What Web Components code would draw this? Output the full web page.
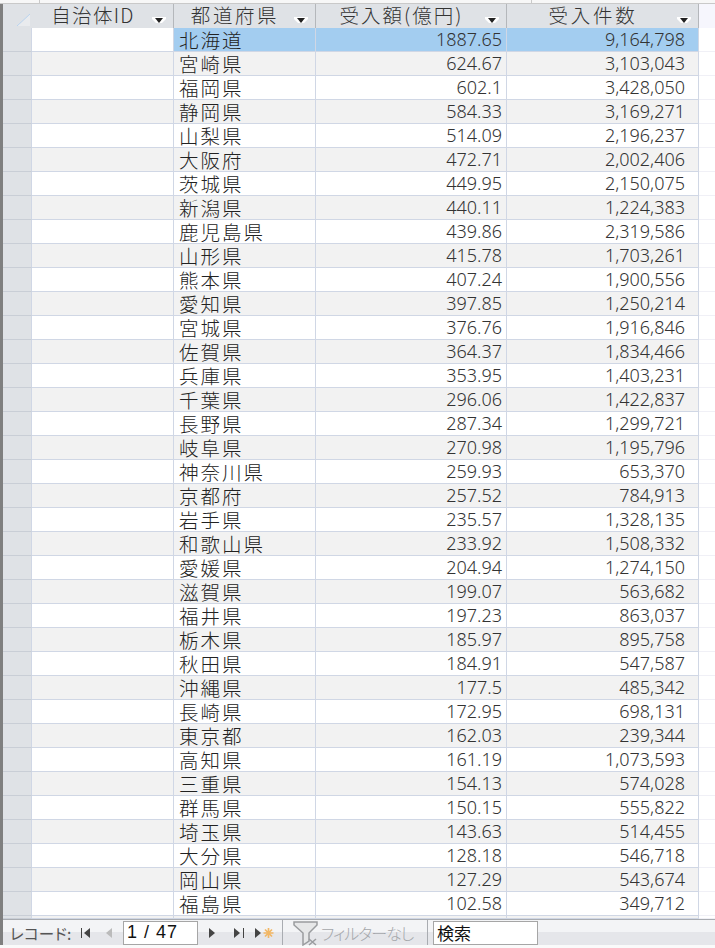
<!DOCTYPE html>
<html lang="ja">
<head>
<meta charset="utf-8">
<title>受入額</title>
<style>
html, body { margin: 0; padding: 0; background: #fafafa; }
body { font-family: "Noto Sans CJK JP", sans-serif; width: 715px; height: 948px; overflow: hidden; }
</style>
</head>
<body>
<access-window></access-window>

<script>
const GRID = '29px 142px 142px 191px 192px';
const CJK = '"Noto Sans CJK JP", sans-serif';
const NUM = '"Noto Sans", "Noto Sans CJK JP", sans-serif';

const DATA = [
  ['北海道','1887.65','9,164,798'],['宮崎県','624.67','3,103,043'],['福岡県','602.1','3,428,050'],
  ['静岡県','584.33','3,169,271'],['山梨県','514.09','2,196,237'],['大阪府','472.71','2,002,406'],
  ['茨城県','449.95','2,150,075'],['新潟県','440.11','1,224,383'],['鹿児島県','439.86','2,319,586'],
  ['山形県','415.78','1,703,261'],['熊本県','407.24','1,900,556'],['愛知県','397.85','1,250,214'],
  ['宮城県','376.76','1,916,846'],['佐賀県','364.37','1,834,466'],['兵庫県','353.95','1,403,231'],
  ['千葉県','296.06','1,422,837'],['長野県','287.34','1,299,721'],['岐阜県','270.98','1,195,796'],
  ['神奈川県','259.93','653,370'],['京都府','257.52','784,913'],['岩手県','235.57','1,328,135'],
  ['和歌山県','233.92','1,508,332'],['愛媛県','204.94','1,274,150'],['滋賀県','199.07','563,682'],
  ['福井県','197.23','863,037'],['栃木県','185.97','895,758'],['秋田県','184.91','547,587'],
  ['沖縄県','177.5','485,342'],['長崎県','172.95','698,131'],['東京都','162.03','239,344'],
  ['高知県','161.19','1,073,593'],['三重県','154.13','574,028'],['群馬県','150.15','555,822'],
  ['埼玉県','143.63','514,455'],['大分県','128.18','546,718'],['岡山県','127.29','543,674'],
  ['福島県','102.58','349,712']
];

class HeaderCell extends HTMLElement {
  connectedCallback() {
    this.attachShadow({ mode: 'open' });
    this.shadowRoot.innerHTML = `
      <style>
        :host { display: flex; align-items: center; justify-content: center; position: relative;
                background: #dfe2e6; border-right: 1px solid #b4b7bb; box-sizing: border-box;
                padding: 0 19px 2px 0; white-space: nowrap;
                font: 300 19.5px/22px ${CJK}; letter-spacing: 2px; color: #333; }
        svg { position: absolute; right: 7px; top: 13px; }
      </style>
      <slot></slot>
      <svg width="14" height="8" viewBox="0 0 14 8">
        <path d="M0 0H14V2L10 6H4L0 2Z" fill="#fff"/>
        <path d="M3 1H11L7 6Z" fill="#222"/>
      </svg>`;
  }
}

class SheetHeader extends HTMLElement {
  connectedCallback() {
    this.attachShadow({ mode: 'open' });
    this.shadowRoot.innerHTML = `
      <style>
        :host { display: grid; grid-template-columns: ${GRID} 1fr; height: 24px; background: #f6f6fd; }
        .corner { background: #dfe2e6; position: relative; }
        svg { position: absolute; left: 14px; top: 9px; }
      </style>
      <div class="corner">
        <svg width="14" height="14" viewBox="0 0 14 14"><path d="M0 13L13 1V13Z" fill="#e9ebee"/><path d="M0 13L13 1" stroke="#b9d3ee" fill="none"/></svg>
      </div>
      <header-cell style="letter-spacing:1.3px">自治体ID</header-cell>
      <header-cell style="letter-spacing:2.6px">都道府県</header-cell>
      <header-cell>受入額(億円)</header-cell>
      <header-cell style="letter-spacing:2.8px">受入件数</header-cell>`;
  }
}

class SheetRow extends HTMLElement {
  connectedCallback() {
    const [pref = '', amount = '', count = ''] = (this.getAttribute('values') || '').split('|');
    this.attachShadow({ mode: 'open' });
    this.shadowRoot.innerHTML = `
      <style>
        :host { display: grid; grid-template-columns: ${GRID} 1fr; height: 24px; overflow: visible; background: #fff; color: #222; }
        :host([alt]) { background: #f2f2f2; }
        :host([alt]) .rest { background: #fff; }
        :host([selected]) .pick { background: #a3cdf0; }
        div { box-sizing: border-box; border-bottom: 1px solid #d0d7e5; border-right: 1px solid #d0d7e5;
              white-space: nowrap; line-height: 23px; }
        .sel { background: #dfe2e6; border-bottom-color: #c9ced6; }
        .pref { font: 300 19.5px/23px ${CJK}; letter-spacing: 2px; padding-left: 5px; }
        .num { font: 300 18px/23px ${NUM}; color: #333; text-align: right; padding-right: 4px; }
        .count { padding-right: 13px; }
        .rest { border-right: 0; border-bottom-color: #f0f0f6; }
      </style>
      <div class="sel"></div>
      <div></div>
      <div class="pref pick">${pref}</div>
      <div class="num pick">${amount}</div>
      <div class="num count pick">${count}</div>
      <div class="rest"></div>`;
  }
}

class RecordNav extends HTMLElement {
  connectedCallback() {
    this.attachShadow({ mode: 'open' });
    this.shadowRoot.innerHTML = `
      <style>
        :host { display: flex; align-items: center; height: 26px; box-sizing: border-box; flex: none;
                border-top: 1px solid #a9acb1;
                background: linear-gradient(#f3f4f6 0, #f3f4f6 50%, #e5e6ea 50%, #e5e6ea 100%);
                font-family: ${CJK}; }
        .label { margin-left: 7px; width: 70px; font-size: 15.5px; font-weight: 400; color: #555;
                 white-space: nowrap; font-feature-settings: "palt"; letter-spacing: .3px; }
        .btn { flex: none; display: block; }
        input { box-sizing: border-box; height: 24px; border: 1px solid #a6a6a6; background: #fff; padding: 0 0 0 3px;
                font: 400 18px "Liberation Sans", sans-serif; color: #111; outline: none; }
        .pos { width: 75px; margin: 0 10px; letter-spacing: 1px; }
        .search { width: 105px; font: 400 17px ${CJK}; margin-left: 5px; }
        .sep { width: 1px; align-self: stretch; background: #a9acb1; flex: none; }
        .nofilter { margin-left: 2px; font-size: 16px; font-weight: 300; color: #a4a6aa; width: 106px;
                    white-space: nowrap; font-feature-settings: "palt"; letter-spacing: -1px; }
      </style>
      <span class="label">レコード:</span>
      <svg class="btn" width="12" height="12" viewBox="0 0 12 12" style="margin-right:13px"><path d="M1.500 1V11" stroke="#444"/><path d="M10 1V11L4 6Z" fill="#444"/></svg>
      <svg class="btn" width="8" height="12" viewBox="0 0 8 12"><path d="M7 1V11L1 6Z" fill="#bbb"/></svg>
      <input class="pos" value="1 / 47" readonly>
      <svg class="btn" width="8" height="12" viewBox="0 0 8 12" style="margin-right:17px"><path d="M1 1V11L7 6Z" fill="#444"/></svg>
      <svg class="btn" width="12" height="12" viewBox="0 0 12 12" style="margin-right:10px"><path d="M1 1V11L7 6Z" fill="#444"/><path d="M10.500 1V11" stroke="#444"/></svg>
      <svg class="btn" width="21" height="14" viewBox="0 0 21 14" style="margin-right:6px">
        <path d="M0 2V12L6 7Z" fill="#444"/>
        <path d="M13.500 2V12M8.500 7H18.500M10 3.500L17 10.500M17 3.500L10 10.500" stroke="#f2b765" stroke-width="1.700"/>
      </svg>
      <span class="sep"></span>
      <svg class="btn" width="26" height="25" viewBox="0 0 26 25" style="margin-left:10px;align-self:flex-start;margin-top:1px">
        <path d="M1 1H24V4L16 12V20L10 24V12L1 4Z" fill="#e6e7e8" stroke="#9a9c9f" stroke-width="1.500"/>
        <path d="M16 18L23 24M23 18L16 24" stroke="#9a9c9f" stroke-width="1.500"/>
      </svg>
      <span class="nofilter">フィルターなし</span>
      <span class="sep"></span>
      <input class="search" value="検索" readonly>`;
  }
}

class AccessWindow extends HTMLElement {
  connectedCallback() {
    this.attachShadow({ mode: 'open' });
    const rows = DATA.map((r, i) =>
      `<sheet-row values="${r.join('|')}"${i % 2 ? ' alt' : ''}${i === 0 ? ' selected' : ''}></sheet-row>`).join('');
    this.shadowRoot.innerHTML = `
      <style>
        :host { display: block; width: 715px; height: 948px; }
        .top { height: 3px; background: #f7f7f7; border-bottom: 1px solid #c9c9c9; display: flex; }
        .top i { width: 1px; background: #c9c9c9; margin-left: 39px; }
        .top i + i { margin-left: 491px; }
        .frame { border-left: 3px solid #7f7f7f; height: 941px; display: flex; flex-direction: column; box-sizing: border-box; }
        .sheet { height: 915px; background: #fff; flex: none; }
      </style>
      <div class="top"><i></i><i></i></div>
      <div class="frame">
        <div class="sheet">
          <sheet-header></sheet-header>
          ${rows}
          <sheet-row alt style="height:3px;overflow:hidden"></sheet-row>
        </div>
        <record-nav></record-nav>
      </div>`;
  }
}

customElements.define('header-cell', HeaderCell);
customElements.define('sheet-header', SheetHeader);
customElements.define('sheet-row', SheetRow);
customElements.define('record-nav', RecordNav);
customElements.define('access-window', AccessWindow);
</script>
</body>
</html>
